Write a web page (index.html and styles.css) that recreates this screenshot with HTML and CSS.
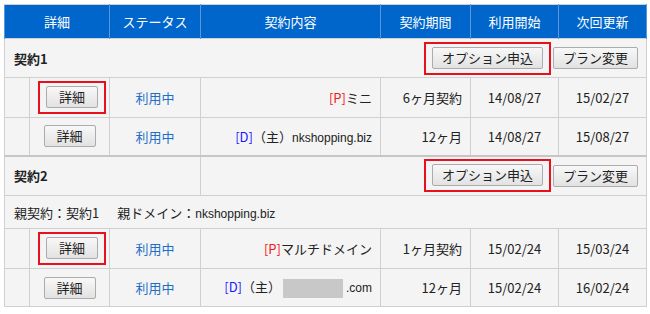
FILE: index.html
```html
<!DOCTYPE html>
<html lang="ja">
<head>
    <meta charset="UTF-8" />
    <title>契約一覧</title>
    <link rel="stylesheet" href="styles.css">
</head>
<body>
    <table class="contracts">
        <colgroup>
            <col class="c-indent">
            <col class="c-detail">
            <col class="c-status">
            <col class="c-content">
            <col class="c-term">
            <col class="c-start">
            <col class="c-next">
        </colgroup>
        <thead>
            <tr>
                <th colspan="2">詳細</th>
                <th>ステータス</th>
                <th>契約内容</th>
                <th>契約期間</th>
                <th>利用開始</th>
                <th>次回更新</th>
            </tr>
        </thead>
        <tbody>
            <tr class="group">
                <td colspan="7">
                    <div class="group-bar">
                        <span class="group-name">契約1</span>
                        <span class="actions">
                            <span class="mark"><button class="btn btn-option">オプション申込</button></span>
                            <button class="btn btn-plan">プラン変更</button>
                        </span>
                    </div>
                </td>
            </tr>
            <tr class="item tall">
                <td></td>
                <td class="center"><span class="mark"><button class="btn btn-detail">詳細</button></span></td>
                <td class="center status">利用中</td>
                <td class="right"><span class="tag-p">[P]</span>ミニ</td>
                <td class="right">6ヶ月契約</td>
                <td class="center">14/08/27</td>
                <td class="center">15/02/27</td>
            </tr>
            <tr class="item">
                <td></td>
                <td class="center"><button class="btn btn-detail">詳細</button></td>
                <td class="center status">利用中</td>
                <td class="right"><span class="tag-d">[D]</span>（主）<span class="domain">nkshopping.biz</span></td>
                <td class="right">12ヶ月</td>
                <td class="center">14/08/27</td>
                <td class="center">15/08/27</td>
            </tr>

            <tr class="group split">
                <td colspan="3"><span class="group-name">契約2</span></td>
                <td colspan="4">
                    <div class="actions">
                        <span class="mark"><button class="btn btn-option">オプション申込</button></span>
                        <button class="btn btn-plan">プラン変更</button>
                    </div>
                </td>
            </tr>
            <tr class="parent">
                <td colspan="7">親契約：契約1<span class="sep"></span>親ドメイン：<span class="domain">nkshopping.biz</span></td>
            </tr>
            <tr class="item tall">
                <td></td>
                <td class="center"><span class="mark"><button class="btn btn-detail">詳細</button></span></td>
                <td class="center status">利用中</td>
                <td class="right"><span class="tag-p">[P]</span>マルチドメイン</td>
                <td class="right">1ヶ月契約</td>
                <td class="center">15/02/24</td>
                <td class="center">15/03/24</td>
            </tr>
            <tr class="item">
                <td></td>
                <td class="center"><button class="btn btn-detail">詳細</button></td>
                <td class="center status">利用中</td>
                <td class="right"><span class="tag-d">[D]</span>（主）<span class="masked"></span><span class="domain">.com</span></td>
                <td class="right">12ヶ月</td>
                <td class="center">15/02/24</td>
                <td class="center">16/02/24</td>
            </tr>
        </tbody>
    </table>
</body>
</html>
```

FILE: styles.css
```css
* {
    margin: 0;
    padding: 0;
    box-sizing: border-box;
}

body {
    font-family: "Noto Sans CJK JP", "Liberation Sans", sans-serif;
    font-size: 13px;
    color: #222;
    background: #fff;
    padding: 4px;
}

.contracts {
    border-collapse: collapse;
    table-layout: fixed;
    width: 643px;
    background: #f4f4f4;
    border: 1px solid #cfcfcf;
}

.c-indent { width: 25px; }
.c-detail { width: 80px; }
.c-status { width: 91px; }
.c-content { width: 180px; }
.c-term { width: 90px; }
.c-start { width: 88px; }
.c-next { width: 88px; }

.contracts th {
    background: #0066cc;
    color: #fff;
    font-weight: normal;
    height: 34px;
    border-left: 1px solid #5b97d8;
    border-right: 1px solid #5b97d8;
    border-top: 1px solid #cfcfcf;
    text-align: center;
}

.contracts td {
    border: 1px solid #d0d0d0;
    padding: 0 8px;
    height: 38px;
}

.item td {
    height: 38px;
}

.item.tall td {
    height: 40px;
}

.group td {
    height: 39px;
}

.group.split td {
    border-top: 2px solid #c6c6c6;
    height: 40px;
}

.parent td {
    height: 33px;
    padding-left: 9px;
}

.parent .sep {
    display: inline-block;
    width: 18px;
}

.group-bar {
    display: flex;
    justify-content: space-between;
    align-items: center;
}

.group-name {
    font-weight: bold;
    padding-left: 1px;
}

.actions {
    display: flex;
    align-items: center;
    justify-content: flex-end;
    gap: 2px;
}

.center { text-align: center; }
.right { text-align: right; }

.status {
    color: #1f6fc6;
}

.tag-p { color: #f01818; }
.tag-d { color: #1a1aff; }

.domain {
    font-family: "Liberation Sans", sans-serif;
    font-size: 12px;
}

.masked {
    display: inline-block;
    width: 60px;
    height: 19px;
    background: #c8c8c8;
    vertical-align: middle;
    margin: 0 3px 0 2px;
}

.btn {
    font-family: inherit;
    font-size: 13px;
    color: #222;
    height: 22px;
    line-height: 20px;
    background: linear-gradient(#f8f8f8, #e2e2e2);
    border: 1px solid #acacac;
    border-radius: 2px;
    vertical-align: middle;
}

.btn-detail { width: 52px; }
.btn-option { width: 111px; }
.btn-plan { width: 85px; }

.mark {
    display: inline-block;
    border: 2px solid #e8101a;
    padding: 3px 6px 4px;
    line-height: 0;
}
```
